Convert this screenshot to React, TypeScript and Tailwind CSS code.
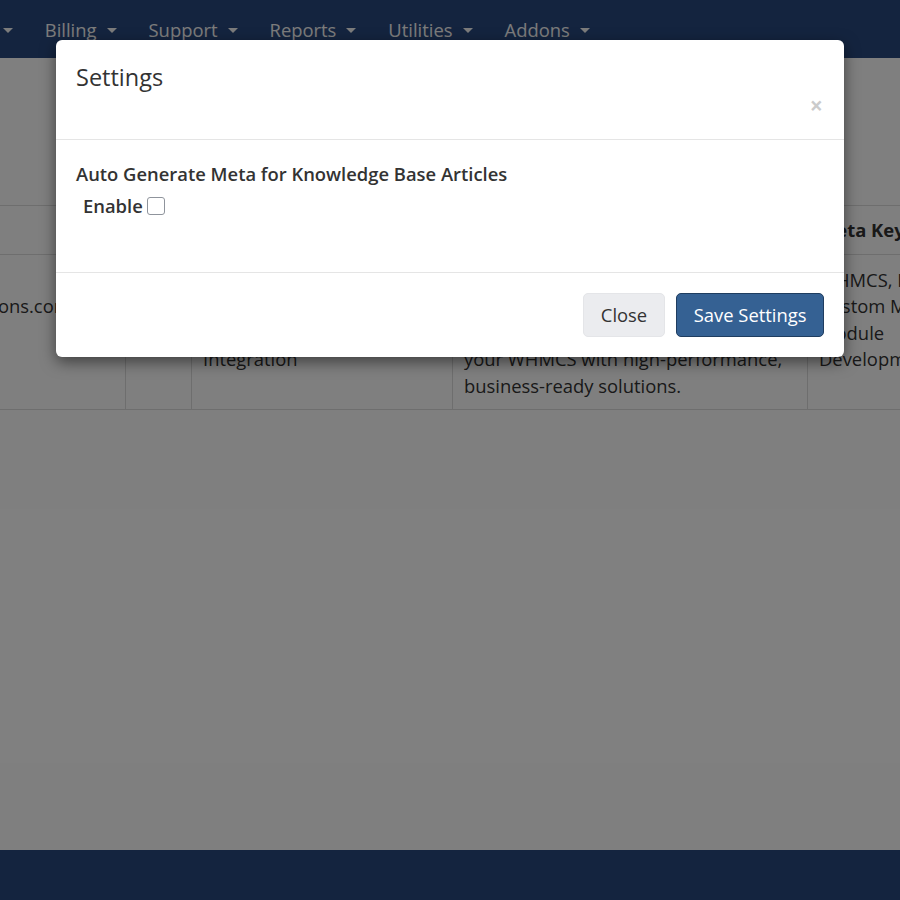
import React from "react";

const Caret = () => (
  <span className="ml-[10px] inline-block h-0 w-0 border-x-[5px] border-t-[5px] border-x-transparent border-t-[#f8f8f8]" />
);

const navItems = ["Clients", "Billing", "Support", "Reports", "Utilities", "Addons"];

export default function App() {
  return (
    <div
      className="relative flex h-[900px] w-[900px] flex-col overflow-hidden bg-white text-[#333]"
      style={{ fontFamily: '"Open Sans", "Noto Sans", sans-serif' }}
    >
      {/* Navbar */}
      <div className="flex h-[58px] shrink-0 items-center bg-[#28487e] pt-[2px]">
        <div className="ml-[-65px] flex items-center gap-[32px] text-[18.4px] leading-[24px] text-[#f8f8f8]">
          {navItems.map((n) => (
            <div key={n} className="flex items-center whitespace-nowrap">
              <span>{n}</span>
              <Caret />
            </div>
          ))}
        </div>
      </div>

      {/* Page content */}
      <div className="flex-1 overflow-hidden pt-[147px]">
        <table className="ml-[-173px] w-[1273px] table-fixed border-collapse text-[18.4px] leading-[26.5px] text-[#333]">
          <colgroup>
            <col className="w-[298px]" />
            <col className="w-[66px]" />
            <col className="w-[261px]" />
            <col className="w-[355px]" />
            <col className="w-[293px]" />
          </colgroup>
          <thead>
            <tr className="border-y border-[#ddd]">
              <th className="border-l border-[#ddd] px-[11px] pt-[11px] pb-[10px] text-left font-bold">Domain</th>
              <th className="border-l border-[#ddd] px-[11px] pt-[11px] pb-[10px] text-left font-bold">ID</th>
              <th className="border-l border-[#ddd] px-[11px] pt-[11px] pb-[10px] text-left font-bold">Title</th>
              <th className="border-l border-[#ddd] px-[11px] pt-[11px] pb-[10px] text-left font-bold">Meta Description</th>
              <th className="border-l border-[#ddd] px-[11px] pt-[11px] pb-[10px] text-left font-bold">Meta Keywords</th>
            </tr>
          </thead>
          <tbody>
            <tr className="border-b border-[#ddd] align-top">
              <td className="border-l border-[#ddd] px-[11px] pt-[12px] pb-[10px]">
                https://www.
                <br />
                whmcsglobalsolutions.com
              </td>
              <td className="border-l border-[#ddd] px-[11px] pt-[12px] pb-[10px]">1</td>
              <td className="border-l border-[#ddd] px-[11px] pt-[12px] pb-[10px]">
                WHMCS Custom
                <br />
                Module Development
                <br />
                and API
                <br />
                Integration
              </td>
              <td className="border-l border-[#ddd] px-[11px] pt-[12px] pb-[10px]">
                Expert WHMCS custom module
                <br />
                development and API integration
                <br />
                services to extend and automate
                <br />
                your WHMCS with high-performance,
                <br />
                business-ready solutions.
              </td>
              <td className="border-l border-[#ddd] px-[11px] pt-[12px] pb-[10px]">
                WHMCS, Integration,
                <br />
                Custom Module,
                <br />
                Module
                <br />
                Development
              </td>
            </tr>
          </tbody>
        </table>
      </div>

      {/* Footer */}
      <div className="h-[50px] shrink-0 bg-[#28487e]" />

      {/* Overlay */}
      <div className="absolute inset-0 bg-black/50" />

      {/* Modal */}
      <div className="absolute inset-0 flex justify-center pt-[40px]">
        <div className="h-fit w-[788px] rounded-[6px] bg-white shadow-[0_5px_15px_rgba(0,0,0,0.5)]">
          <div className="flex flex-col border-b border-[#e5e5e5] px-[20px] pt-[21px] pb-[23px]">
            <div className="text-[23.5px] font-normal leading-[33px] text-[#333]">Settings</div>
            <div className="mr-[1px] self-end text-[23px] font-bold leading-[22px] text-black opacity-20">×</div>
          </div>
          <div className="px-[20px] pt-[20px] pb-[53px]">
            <div className="text-[18.4px] font-semibold leading-[27px] text-[#333]">
              Auto Generate Meta for Knowledge Base Articles
            </div>
            <div className="mt-[5px] flex h-[27px] items-center pl-[7px]">
              <span className="text-[18.4px] font-semibold leading-[27px] text-[#333]">Enable</span>
              <span className="ml-[4px] inline-block h-[18px] w-[18px] rounded-[3px] border border-[#8f949c] bg-white" />
            </div>
          </div>
          <div className="flex justify-end gap-[11px] border-t border-[#e5e5e5] p-[20px]">
            <button className="h-[44px] rounded-[5px] border border-[#e4e5e8] bg-[#ebecef] px-[17px] text-[18.4px] leading-[24px] text-[#333]">
              Close
            </button>
            <button className="h-[44px] rounded-[5px] border border-[#1f3d60] bg-[#356193] px-[16.5px] text-[18.4px] leading-[24px] text-white">
              Save Settings
            </button>
          </div>
        </div>
      </div>
    </div>
  );
}
